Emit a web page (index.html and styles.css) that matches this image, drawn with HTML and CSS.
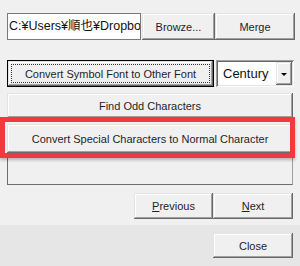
FILE: index.html
```html
<!DOCTYPE html>
<html>
<head>
<meta charset="utf-8">
<link rel="stylesheet" href="styles.css">
</head>
<body>
<div class="panel">
  <div class="row row1">
    <div class="textbox">C:¥Users¥順也¥Dropbo</div>
    <div class="btn browse">Browze...</div>
    <div class="btn merge">Merge</div>
  </div>
  <div class="row row2">
    <div class="btn default convert"><div class="focus">Convert Symbol Font to Other Font</div></div>
    <div class="combo">
      <div class="combo-text">Century</div>
      <div class="combo-arrow"><span class="tri"></span></div>
    </div>
  </div>
  <div class="btn wide find">Find Odd Characters</div>
  <div class="highlight-wrap">
    <div class="btn wide special">Convert Special Characters to Normal Character</div>
    <div class="red-frame"></div>
  </div>
  <div class="emptybox"></div>
  <div class="row nav">
    <div class="btn navbtn"><span><u>P</u>revious</span></div>
    <div class="btn navbtn"><span><u>N</u>ext</span></div>
  </div>
  <div class="footer">
    <div class="btn close">Close</div>
  </div>
</div>
</body>
</html>
```
FILE: styles.css
```css
html, body {
  margin: 0;
  padding: 0;
  background: #f0f0f0;
}
.panel {
  width: 300px;
  height: 266px;
  overflow: hidden;
  font-family: "Liberation Sans", "Noto Sans CJK JP", sans-serif;
  font-size: 11px;
  color: #1e1e2a;
  display: flex;
  flex-direction: column;
}
.row {
  display: flex;
}
.row1 {
  margin-top: 13px;
  padding-left: 7px;
  height: 27px;
}
.textbox {
  width: 131px;
  height: 25px;
  border: 1px solid #7a7a7a;
  background: #fff;
  overflow: hidden;
  white-space: nowrap;
  font-size: 12.5px;
  line-height: 25px;
  padding-left: 1px;
  color: #111;
}
.btn {
  box-sizing: border-box;
  background: #f0f0f0;
  box-shadow: inset -1px -1px 0 #696969, inset 1px 1px 0 #e3e3e3, inset -2px -2px 0 #a0a0a0, inset 2px 2px 0 #ffffff;
  display: flex;
  align-items: center;
  justify-content: center;
  white-space: nowrap;
}
.browse {
  width: 73px;
  height: 27px;
  margin-left: 1px;
}
.merge {
  width: 80px;
  height: 27px;
}
.row2 {
  margin-top: 20px;
  padding-left: 7px;
  height: 27px;
}
.default {
  border: 1px solid #000;
}
.convert {
  width: 207px;
  height: 27px;
  padding: 3px;
}
.focus {
  flex: 1;
  align-self: stretch;
  border: 1px dotted #333;
  display: flex;
  align-items: center;
  justify-content: center;
}
.combo {
  margin-left: 2px;
  width: 78px;
  height: 27px;
  box-sizing: border-box;
  background: #fff;
  box-shadow: inset 1px 1px 0 #a0a0a0, inset -1px -1px 0 #fff, inset 2px 2px 0 #696969, inset -2px -2px 0 #e3e3e3;
  display: flex;
  align-items: stretch;
  padding: 2px;
}
.combo-text {
  flex: 1;
  font-size: 13px;
  line-height: 23px;
  padding-left: 5px;
  color: #111;
}
.combo-arrow {
  width: 16px;
  background: #f0f0f0;
  box-shadow: inset -1px -1px 0 #696969, inset 1px 1px 0 #e3e3e3, inset -2px -2px 0 #a0a0a0, inset 2px 2px 0 #ffffff;
  display: flex;
  align-items: center;
  justify-content: center;
}
.tri {
  width: 0;
  height: 0;
  border-left: 3px solid transparent;
  border-right: 3px solid transparent;
  border-top: 3px solid #000;
  margin-top: 1px;
}
.wide {
  margin-left: 7px;
  width: 286px;
}
.find {
  margin-top: 6px;
  height: 25px;
}
.highlight-wrap {
  position: relative;
  padding-top: 6px;
}
.special {
  height: 29px;
}
.red-frame {
  position: absolute;
  left: 0;
  top: -1px;
  width: 295px;
  height: 41px;
  box-sizing: border-box;
  border: 5px solid #f2393f;
  box-shadow: 0 2px 3px rgba(0, 0, 0, 0.25);
}
.emptybox {
  margin-left: 7px;
  width: 286px;
  height: 32px;
  box-sizing: border-box;
  border-left: 1px solid #6d6d6d;
  border-bottom: 1px solid #6d6d6d;
  border-right: 1px solid #a0a0a0;
}
.nav {
  margin-top: 8px;
  padding-left: 134px;
  height: 26px;
}
.navbtn {
  width: 79px;
  height: 26px;
}
.navbtn + .navbtn {
  width: 80px;
}
.footer {
  margin-top: 6px;
  flex: 1;
  background: #e6e6e6;
  padding-top: 8px;
  padding-left: 213px;
}
.close {
  width: 80px;
  height: 25px;
}
```
